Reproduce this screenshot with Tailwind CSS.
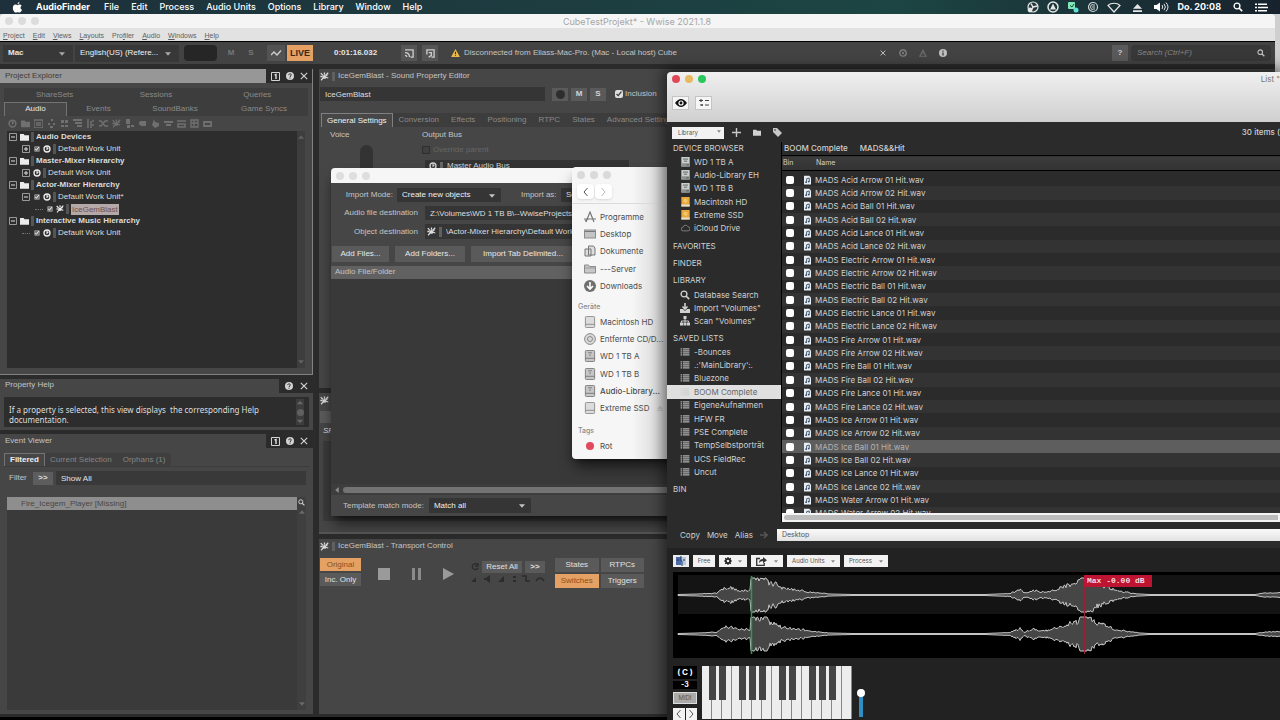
<!DOCTYPE html>
<html lang="de">
    <head>
        <meta charset="UTF-8">
        <title>CubeTestProjekt - Wwise</title>
        <script src="https://cdn.jsdelivr.net/npm/@tailwindcss/browser@4"></script>
    </head>
    <body class="relative flex flex-col h-screen overflow-hidden bg-[#1c1c1c] font-['Liberation_Sans',Arial,sans-serif] text-[8px] leading-3 text-[#c4c4c4]">
      <!-- icon set -->
      <svg class="hidden">
        <symbol id="sfx" viewBox="0 0 12 12"><g stroke="currentColor" stroke-width="1.700" fill="none"><path d="M1 1.500l3 3M6 .5v3M11 1L7.500 4.500M.5 6h3M1.500 11l3-3.500M8 7l3 1"/></g><circle cx="6" cy="6.500" r="2.600" fill="currentColor"/><circle cx="9" cy="4" r="1.200" fill="currentColor"/></symbol>
        <symbol id="dir" viewBox="0 0 12 10"><path d="M0 1h5l1 1.500h6V10H0z" fill="currentColor"/></symbol>
        <symbol id="unit" viewBox="0 0 12 12"><circle cx="6" cy="6" r="4.500" fill="none" stroke="currentColor" stroke-width="2"/><path d="M6 2v4.500l2-2" fill="none" stroke="currentColor" stroke-width="1.600"/></symbol>
        <symbol id="help" viewBox="0 0 12 12"><circle cx="6" cy="6" r="6" fill="#d4d4d4"/><path d="M4 4.700c0-2.600 4-2.500 4-.3C8 6 6 5.800 6 7.500M6 8.500v1.500" fill="none" stroke="#2b2b2b" stroke-width="1.500"/></symbol>
        <symbol id="close" viewBox="0 0 10 10"><path d="M1 1l8 8M9 1L1 9" stroke="#d4d4d4" stroke-width="1.400"/></symbol>
        <symbol id="one" viewBox="0 0 9 9"><path d="M.5.5h8v8h-8z" fill="none" stroke="#d4d4d4"/><path d="M3.500 3L5 2.500V7" fill="none" stroke="#f0f0f0" stroke-width="1.300"/></symbol>
        <symbol id="down" viewBox="0 0 10 6"><path d="M0 0h10L5 6z" fill="currentColor"/></symbol>
        <symbol id="lens" viewBox="0 0 12 12"><circle cx="4.800" cy="4.800" r="3.500" fill="none" stroke="currentColor" stroke-width="1.600"/><path d="M7.500 7.500L11 11" stroke="currentColor" stroke-width="2"/></symbol>
        <symbol id="hdd" viewBox="0 0 10 12"><path d="M0 0h10v11.500H0z" fill="#c9cdcc"/><path d="M0 7.500h10v4H0z" fill="#8d9291"/><path d="M2 2.500h6M3 5h4M6 9.500h3" stroke="#4c5654"/></symbol>
        <symbol id="ssd" viewBox="0 0 10 12"><path d="M0 0h10v11.500H0z" fill="#eaa93c"/><path d="M0 9h10v2.500H0z" fill="#e4dfd4"/><circle cx="5" cy="4.500" r="2.500" fill="#f4c66b"/></symbol>
        <symbol id="disk" viewBox="0 0 12 13"><rect x="1" y=".5" width="10" height="12" rx="1" fill="#dcdcdc" stroke="#8b8b8b"/><path d="M1 9h10" stroke="#8b8b8b"/></symbol>
        <symbol id="disk2" viewBox="0 0 12 13"><rect x="1" y=".5" width="10" height="12" rx="1" fill="#c6c6c6" stroke="#7b7b7b"/><path d="M1 9h10M4 3h4M5 5.500h2" stroke="#777"/></symbol>
        <symbol id="rows" viewBox="0 0 11 10"><path d="M0 1.200h2m1 0h8M0 3.700h2m1 0h8M0 6.200h2m1 0h8M0 8.700h2m1 0h8" stroke="currentColor" stroke-width="1.600"/></symbol>
        <symbol id="wav" viewBox="0 0 8 10"><path d="M0 0h6l2 2v8H0z" fill="#e9edf1"/><path d="M3 7.500V3.500l3-.8v4" fill="none" stroke="#33506c"/><circle cx="2.400" cy="7.500" r="1" fill="#33506c"/><circle cx="5.400" cy="6.800" r="1" fill="#33506c"/></symbol>
      </svg>

      <!-- macOS menu bar -->
      <header class="flex items-center h-[14px] shrink-0 px-3 bg-linear-to-r from-[#1d303b] via-[#1c4543] via-70% to-[#17222d] font-['Inter',sans-serif] text-[9px] font-medium text-white">
        <svg class="w-[11px] h-[11px] mr-[13px]" viewBox="0 0 12 13"><path d="M8.300 0c0 1.500-1 2.700-2.300 2.700C6 1.300 7 .2 8.300 0zM6 3.700c.8 0 1.300-.6 2.500-.6 1 0 1.900.5 2.400 1.300-2 1.200-1.700 4 .4 4.900-.5 1.500-1.600 3.200-2.800 3.200-.9 0-1.200-.5-2.300-.5s-1.500.5-2.300.5C2.300 12.500.5 9.600.5 7.100.5 4.500 2 3.100 3.700 3.100c1 0 1.700.6 2.300.6z" fill="#fff"/></svg>
        <nav class="flex gap-3">
          <a href="#" class="pr-[2px] font-bold">AudioFinder</a>
          <a href="#">File</a>
          <a href="#">Edit</a>
          <a href="#">Process</a>
          <a href="#">Audio Units</a>
          <a href="#">Options</a>
          <a href="#">Library</a>
          <a href="#">Window</a>
          <a href="#">Help</a>
        </nav>
        <div class="flex items-center gap-2 ml-auto">
          <svg class="size-3" viewBox="0 0 12 12"><circle cx="6" cy="6" r="5" fill="#26383f" stroke="#e6e6e6" stroke-width="1.200"/><path d="M6 6L4 2.500M6 6l4.500-1M6 6l-2 4" stroke="#e6e6e6" stroke-width="1.500"/><circle cx="3" cy="9" r="2.400" fill="#e6e6e6"/></svg>
          <svg class="size-3" viewBox="0 0 12 12"><circle cx="6" cy="6" r="5" fill="none" stroke="#e6e6e6" stroke-width="1.500"/><path d="M6 2.500L9 8.500H3z" fill="#e6e6e6"/></svg>
          <svg class="size-3" viewBox="0 0 12 12"><rect x="1" y="1" width="7" height="7" rx="1" fill="#7fe8b6"/><path d="M3 4.500l2 1.500 2-3" stroke="#1b4b3d" fill="none"/><circle cx="9" cy="9" r="2.500" fill="#5ee0d4"/></svg>
          <svg class="size-3" viewBox="0 0 12 12"><circle cx="6" cy="6" r="4.500" fill="none" stroke="#d0d6d8" stroke-width="1.200"/><path d="M6 3.500a2.500 2.500 0 000 5M6 4h2M5 6h3M6 8h2" fill="none" stroke="#d0d6d8"/></svg>
          <svg class="w-[14px] h-3" viewBox="0 0 14 12"><path d="M1 4.500C4 1.500 10 1.500 13 4.500L7 11z" fill="none" stroke="#e6e6e6" stroke-width="1.200"/></svg>
          <svg class="mx-1 size-[9px]" viewBox="0 0 10 10"><path d="M5 1l5 5.500H0zM0 8h10v2H0z" fill="#e6e6e6"/></svg>
          <svg class="w-[15px] h-3" viewBox="0 0 15 12"><path d="M0 4h2.500L6 1.500v9L2.500 8H0z" fill="#fff"/><path d="M8 4q1.500 2 0 4M10 2.800q2.800 3.200 0 6.400M12 1.500q4 4.500 0 9" fill="none" stroke="#e6e6e6"/></svg>
          <span class="font-bold">Do. 20:08</span>
          <svg class="ml-1 size-[10px]"><use href="#lens"/></svg>
          <svg class="w-[13px] h-[9px] ml-1" viewBox="0 0 13 9"><path d="M0 1.200h2m1 0h9M0 4.500h2m1 0h10M0 7.800h2m1 0h9" stroke="#fff" stroke-width="1.500"/></svg>
        </div>
      </header>

      <!-- Wwise -->
      <div class="flex flex-col flex-1 min-h-0 pr-[5px] border-b-3 border-black bg-[#cfcfcf]">
        <div class="flex items-center h-[14px] shrink-0 px-[5px] gap-[5px] bg-[#f5f5f5] rounded-t">
          <span class="size-2 rounded-full bg-[#dcdcdc]"></span>
          <span class="size-2 rounded-full bg-[#dcdcdc]"></span>
          <span class="size-2 rounded-full bg-[#dcdcdc]"></span>
          <h1 class="flex-1 pr-10 pt-[2px] text-center font-['Inter',sans-serif] text-[9px] text-[#a6a6a6]">CubeTestProjekt* - Wwise 2021.1.8</h1>
        </div>
        <nav class="flex items-center h-[14px] shrink-0 pt-[2px] px-[3px] gap-2 border-b border-black bg-[#e2e2e2] text-[7px] text-[#5e5e5e]">
          <a href="#"><u>P</u>roject</a>
          <a href="#"><u>E</u>dit</a>
          <a href="#"><u>V</u>iews</a>
          <a href="#"><u>L</u>ayouts</a>
          <a href="#">Pro<u>f</u>iler</a>
          <a href="#"><u>A</u>udio</a>
          <a href="#"><u>W</u>indows</a>
          <a href="#"><u>H</u>elp</a>
        </nav>

        <div class="flex items-center h-6 shrink-0 pr-1 bg-[#434343] border-b-2 border-[#2b2b2b]">
          <label class="relative ml-[3px]">
            <select aria-label="Platform" class="w-[70px] h-[17px] px-[5px] appearance-none bg-[#383838] text-[#e6e6e6] font-bold"><option>Mac</option></select>
            <svg class="absolute right-2 top-[7px] w-[6px] h-1 text-[#a8a8a8]"><use href="#down"/></svg>
          </label>
          <label class="relative ml-[2px]">
            <select aria-label="Language" class="w-[104px] h-[17px] px-[5px] appearance-none bg-[#383838] text-[#f0f0f0]"><option>English(US) (Refere...</option></select>
            <svg class="absolute right-2 top-[7px] w-[6px] h-1 text-[#a8a8a8]"><use href="#down"/></svg>
          </label>
          <span class="w-[33px] h-4 ml-[5px] rounded-sm bg-[#262626]"></span>
          <button class="w-5 h-4 ml-1 font-bold text-[#777]">M</button>
          <button class="w-5 h-4 font-bold text-[#777]">S</button>
          <button class="grid w-[18px] h-4 ml-[6px] place-items-center bg-[#535353]"><svg class="w-[11px] h-[6px]" viewBox="0 0 11 6"><path d="M0 5l3-3 3 3 4-4.500" fill="none" stroke="#d0d0d0" stroke-width="1.300"/></svg></button>
          <button class="w-[26px] h-4 ml-[2px] bg-[#e5a063] font-bold text-[9px] text-[#3a2a1a]">LIVE</button>
          <span class="ml-[21px] w-[67px] font-bold text-[#e6e6e6]">0:01:16.032</span>
          <button class="grid w-4 h-4 mr-[5px] place-items-center bg-[#555]"><svg class="size-[9px]" viewBox="0 0 10 10"><path d="M0 1h9v8H6M0 4q5 0 5 5M0 7q2 0 2 2" fill="none" stroke="#ccc" stroke-width="1.500"/></svg></button>
          <button class="grid w-4 h-4 place-items-center bg-[#555]"><svg class="size-[9px]" viewBox="0 0 10 10"><path d="M1 6V1h8v8H6M3 4h3v3L3 9" fill="none" stroke="#ccc" stroke-width="1.500"/></svg></button>
          <svg class="w-[9px] h-2 ml-[13px] mr-1" viewBox="0 0 10 9"><path d="M5 0l5 9H0z" fill="#e9b949"/><path d="M5 3v3M5 7v1" stroke="#3a2d10" stroke-width="1.200"/></svg>
          <p class="w-[415px]">Disconnected from Eliass-Mac-Pro. (Mac - Local host) Cube</p>
          <div class="flex items-center gap-3">
            <svg class="size-[6px] mx-px"><use href="#close"/></svg>
            <svg class="size-2" viewBox="0 0 10 10"><circle cx="5" cy="5" r="4" fill="none" stroke="#858585" stroke-width="1.600"/><path d="M3.500 3.500l3 3m0-3l-3 3" stroke="#858585"/></svg>
            <svg class="size-2" viewBox="0 0 10 9"><path d="M5 1l4 7.500H1zM5 4v2" fill="none" stroke="#6c6c6c" stroke-width="1.400"/></svg>
            <svg class="size-2" viewBox="0 0 10 10"><circle cx="5" cy="5" r="5" fill="#c0c0c0"/><path d="M5 2v1.500M5 4.500V8" stroke="#444" stroke-width="1.700"/></svg>
          </div>
          <button class="w-4 h-4 ml-auto bg-[#5a5a5a] font-bold text-[#d0d0d0]">?</button>
          <label class="flex items-center w-[140px] h-4 ml-[3px] px-[6px] rounded-sm bg-[#383838]">
            <input aria-label="Search" placeholder="Search (Ctrl+F)" class="flex-1 min-w-0 italic placeholder:text-[#858585]">
            <svg class="size-2 text-[#c0c0c0]"><use href="#lens"/></svg>
          </label>
        </div>

        <div class="flex flex-1 min-h-0 gap-[6px] pt-[3px] bg-[#2b2b2b]">
          <!-- left column -->
          <div class="flex flex-col w-[313px] shrink-0 gap-1 pb-[3px]">
            <section class="flex flex-col h-[306px] border-r border-b border-[#828282] bg-[#464646]">
              <header class="flex h-[14px] shrink-0 bg-[#2b2b2b]">
                <h2 class="flex-1 px-[5px] pt-px bg-[#979797] text-[#3c3c3c]">Project Explorer</h2>
                <div class="flex items-center gap-[6px] pl-[5px] pr-1">
                  <svg class="size-[9px]"><use href="#one"/></svg>
                  <svg class="size-2"><use href="#help"/></svg>
                  <svg class="size-2"><use href="#close"/></svg>
                </div>
              </header>
              <div class="grid grid-cols-3 mx-1 mt-[5px] h-[14px] shrink-0 text-center leading-[14px] text-[#8a8a8a] bg-[#3d3d3d]">
                <a href="#">ShareSets</a>
                <a href="#">Sessions</a>
                <a href="#">Queries</a>
              </div>
              <div class="grid grid-cols-[63px_63px_90px_1fr] mx-1 h-[14px] shrink-0 text-center leading-[14px] text-[#8a8a8a] bg-[#3d3d3d]">
                <a href="#" class="border-t border-x border-[#737373] bg-[#474747] text-[#e8e8e8] leading-3">Audio</a>
                <a href="#">Events</a>
                <a href="#">SoundBanks</a>
                <a href="#">Game Syncs</a>
              </div>
              <div class="flex items-center h-[15px] shrink-0 px-2 gap-[4px] text-[#707070]">
                <svg class="size-[9px]"><use href="#unit"/></svg>
                <svg class="size-[9px]"><use href="#dir"/></svg>
                <svg class="size-[9px]" viewBox="0 0 9 9"><path d="M0 1h9v8H0zM2 4h5M2 6h5" fill="none" stroke="currentColor" stroke-width="1.400"/></svg>
                <svg class="size-[9px]" viewBox="0 0 9 9"><path d="M4 0h2v2H4zM1 4h2v2H1zM6 4h2v2H6zM3 7h3v2H3z" fill="currentColor"/></svg>
                <svg class="size-[9px]" viewBox="0 0 9 9"><path d="M1 1h3v3H1zM5 1h3v3H5zM1 6h3v2H1zM5 6h3v2H5z" fill="currentColor"/></svg>
                <svg class="size-[9px]" viewBox="0 0 9 9"><path d="M0 1h9M2 4h7M4 7h5" stroke="currentColor" stroke-width="1.800"/></svg>
                <svg class="size-[9px]" viewBox="0 0 9 9"><path d="M2 0v9M5 2v7M7 1v2M7 5v2" stroke="currentColor" stroke-width="1.500"/></svg>
                <svg class="size-[9px]" viewBox="0 0 9 9"><path d="M0 2h2l4 5h3M0 7h2l4-5h3" fill="none" stroke="currentColor" stroke-width="1.300"/></svg>
                <svg class="size-[9px]"><use href="#sfx"/></svg>
                <svg class="size-[9px]" viewBox="0 0 9 9"><path d="M1 0h4v5H1zM2 6h3v3H2zM6 6h3v2H6z" fill="currentColor"/></svg>
                <svg class="size-[9px]" viewBox="0 0 9 9"><path d="M1 3l2-1h5v5H3L1 5z" fill="currentColor"/></svg>
                <svg class="size-[9px]" viewBox="0 0 9 9"><path d="M3 0l1 3 4 1v3L4 9 1 6z" fill="currentColor"/></svg>
                <svg class="size-[9px]" viewBox="0 0 9 9"><path d="M0 3h9M2 6h5" stroke="currentColor" stroke-width="1.800"/></svg>
                <svg class="size-[9px]" viewBox="0 0 9 9"><path d="M0 2h9M1 5h7v3H1z" fill="none" stroke="currentColor" stroke-width="1.500"/></svg>
                <svg class="size-[9px]" viewBox="0 0 9 9"><path d="M1 1h7v7H1zM1 4h7M4 1v7" fill="none" stroke="currentColor" stroke-width="1.300"/></svg>
                <svg class="size-[9px]" viewBox="0 0 9 9"><path d="M1 3h7v4H1z" fill="none" stroke="currentColor" stroke-width="1.800"/></svg>
              </div>
              <div class="flex flex-1 min-h-0 mx-[7px] mb-[6px] bg-[#2d2d2d]">
                <ul id="tree" class="flex-1"></ul>
                <div class="flex flex-col items-center justify-between w-2 py-1 bg-[#3d3d3d] text-[#606060]">
                  <svg class="w-[6px] h-1 rotate-180"><use href="#down"/></svg>
                  <svg class="w-[6px] h-1"><use href="#down"/></svg>
                </div>
              </div>
            </section>

            <section class="h-[51px] shrink-0 bg-[#464646]">
              <header class="flex h-[14px]">
                <h2 class="flex-1 px-[5px]">Property Help</h2>
                <div class="flex items-center gap-[7px] pl-[6px] pr-[5px] bg-[#2b2b2b]">
                  <svg class="size-2"><use href="#help"/></svg>
                  <svg class="size-2"><use href="#close"/></svg>
                </div>
              </header>
              <div class="flex mx-1 mt-1 h-[30px] bg-[#2d2d2d]">
                <p class="flex-1 pl-[5px] pt-2 font-['Noto_Sans',sans-serif] leading-[10px] text-[#dedede]">If a property is selected, this view displays &nbsp;the corresponding Help documentation.</p>
                <div class="flex flex-col items-center justify-between w-2 mr-[5px] my-[2px] py-px bg-[#3d3d3d] text-[#686868]">
                  <svg class="w-[6px] h-[5px] rotate-180"><use href="#down"/></svg>
                  <span class="size-[7px] rounded-full bg-[#606060]"></span>
                  <svg class="w-[6px] h-[5px]"><use href="#down"/></svg>
                </div>
              </div>
            </section>

            <section class="flex flex-col flex-1 min-h-0 bg-[#464646]">
              <header class="flex h-[14px] shrink-0">
                <h2 class="flex-1 px-[5px] pt-px">Event Viewer</h2>
                <div class="flex items-center gap-[6px] px-[5px] bg-[#2b2b2b]">
                  <svg class="size-[9px]"><use href="#one"/></svg>
                  <svg class="size-2"><use href="#help"/></svg>
                  <svg class="size-2"><use href="#close"/></svg>
                </div>
              </header>
              <div class="flex mx-1 mt-[5px] h-[14px] shrink-0 border-b border-[#3c3c3c] leading-[14px] text-[#858585]">
                <a href="#" class="px-[5px] border-t border-x border-[#737373] font-bold text-[#f0f0f0] leading-3">Filtered</a>
                <a href="#" class="px-[5px] bg-[#3f3f3f]">Current Selection</a>
                <a href="#" class="px-[6px] bg-[#3f3f3f]">Orphans (1)</a>
              </div>
              <div class="flex items-center mt-1 mx-[7px] h-[14px] shrink-0">
                <label for="filter" class="w-[26px] pl-[2px]">Filter</label>
                <button class="w-5 h-[13px] bg-[#5d5d5d] font-bold text-[#dcdcdc]">&gt;&gt;</button>
                <input id="filter" value="Show All" class="flex-1 min-w-0 h-[14px] ml-[3px] px-[5px] bg-[#393939] text-[#e4e4e4]">
              </div>
              <div class="flex flex-1 min-h-0 mx-[7px] mt-3 mb-1">
                <ul class="flex-1 bg-[#3a3a3a]">
                  <li class="h-[13px] pl-[14px] leading-[13px] bg-[#8e8e8e] text-[#484848]">Fire_Icegem_Player [Missing]</li>
                </ul>
                <div class="flex flex-col items-center justify-between w-[9px] pt-[2px] pb-1 bg-[#3f3f3f] text-[#6a6a6a]">
                  <div class="flex flex-col items-center gap-1">
                    <svg class="size-[7px] text-[#d8d8d8]"><use href="#lens"/></svg>
                    <svg class="w-[6px] h-1 rotate-180"><use href="#down"/></svg>
                  </div>
                  <svg class="w-[6px] h-1"><use href="#down"/></svg>
                </div>
              </div>
            </section>
          </div>

          <!-- right column -->
          <div class="flex flex-col flex-1 min-w-0 gap-[5px] pb-[3px]">
            <section class="h-[319px] shrink-0 bg-[#464646]">
              <header class="flex items-center h-[14px] px-px">
                <svg class="size-[9px] text-[#d8d8d8]"><use href="#sfx"/></svg>
                <span class="w-[3px] h-[9px] mx-[3px] bg-[#606060]"></span>
                <h2>IceGemBlast - Sound Property Editor</h2>
              </header>
              <div class="flex items-center mt-1 px-px h-[14px]">
                <input aria-label="Name" value="IceGemBlast" class="w-[225px] h-[14px] px-[5px] bg-[#353535] text-[#dedede]">
                <button aria-label="Color" class="grid w-4 h-[13px] ml-[7px] place-items-center bg-[#5a5a5a]"><span class="size-[9px] rounded-full bg-[#2e2e2e]"></span></button>
                <button class="w-4 h-[13px] ml-[3px] bg-[#5a5a5a] font-bold text-[#d4d4d4]">M</button>
                <button class="w-4 h-[13px] ml-[3px] bg-[#5a5a5a] font-bold text-[#d4d4d4]">S</button>
                <label class="flex items-center gap-[2px] ml-[9px]"><input type="checkbox" checked class="size-2 accent-[#ddd]">Inclusion</label>
              </div>
              <div class="flex mt-3 ml-[2px] h-[14px] leading-[14px] bg-[#3d3d3d] text-[#8a8a8a]">
                <a href="#" class="px-[5px] border-t border-x border-[#808080] bg-[#474747] text-[#f0f0f0]">General Settings</a>
                <a href="#" class="px-[6px]">Conversion</a>
                <a href="#" class="px-[6px]">Effects</a>
                <a href="#" class="px-[6px]">Positioning</a>
                <a href="#" class="px-[6px]">RTPC</a>
                <a href="#" class="px-[6px]">States</a>
                <a href="#" class="px-[6px]">Advanced Settings</a>
              </div>
              <div class="flex">
                <div class="w-[103px] pl-[11px] pt-[2px]">
                  <h3>Voice</h3>
                  <div class="w-[13px] h-10 mt-1 ml-[30px] rounded-full bg-[#333]"></div>
                </div>
                <div class="pt-[2px]">
                  <h3>Output Bus</h3>
                  <label class="flex items-center gap-[3px] h-[17px] text-[#666]"><input type="checkbox" class="appearance-none size-2 border border-[#2e2e2e] bg-[#404040]">Override parent</label>
                  <div class="flex items-center w-[204px] h-3 ml-[3px] pl-1 mt-[2px] bg-[#333] text-[#d0d0d0]">
                    <svg class="size-2"><use href="#unit"/></svg>
                    <span class="w-[3px] h-2 ml-[3px] mr-1 bg-[#666]"></span>Master Audio Bus
                  </div>
                </div>
              </div>
            </section>

            <section class="h-[141px] shrink-0 border-b-2 border-[#555] bg-[#464646]">
              <div class="h-[14px] pl-px pt-[3px]"><svg class="size-[9px] text-[#d8d8d8]"><use href="#sfx"/></svg></div>
              <div class="w-10 h-3 mt-1 ml-px bg-[#5a5a5a]"></div>
              <p class="pl-1 mt-[2px] italic text-[#dedede]">SFX</p>
              <div class="h-20 mt-1 ml-1 bg-[#3b3b3b]"></div>
            </section>

            <section class="flex-1 min-h-0 bg-[#464646]">
              <header class="flex items-center h-[14px] px-px">
                <svg class="size-[9px] text-[#d8d8d8]"><use href="#sfx"/></svg>
                <span class="w-[3px] h-[9px] mx-[3px] bg-[#606060]"></span>
                <h2>IceGemBlast - Transport Control</h2>
              </header>
              <div class="flex mt-[5px] pl-px">
                <div class="grid w-[41px] gap-[2px] h-7">
                  <button class="bg-[#e5a063] text-[#8a5220]">Original</button>
                  <button class="bg-[#5a5a5a] text-[#e0e0e0]">Inc. Only</button>
                </div>
                <div class="flex items-center gap-[22px] h-7 w-[110px] pl-[17px]">
                  <button aria-label="Stop" class="size-3 mt-1 bg-[#9a9a9a]"></button>
                  <button aria-label="Pause" class="w-[9px] h-3 mt-1 border-x-3 border-[#8a8a8a]"></button>
                  <button aria-label="Play" class="mt-1"><svg class="w-[11px] h-3" viewBox="0 0 11 12"><path d="M0 0l11 6-11 6z" fill="#9a9a9a"/></svg></button>
                </div>
                <div class="w-[76px] pt-[3px]">
                  <div class="flex items-center gap-[3px] h-3">
                    <svg class="size-2" viewBox="0 0 8 8"><path d="M6.500 1.500A3 3 0 107 5M7 0v3H4" fill="none" stroke="#2c2c2c" stroke-width="1.300"/></svg>
                    <button class="w-10 h-3 bg-[#5a5a5a] text-[#e0e0e0]">Reset All</button>
                    <button class="w-5 h-3 bg-[#5a5a5a] font-bold text-[#e0e0e0]">&gt;&gt;</button>
                  </div>
                  <svg class="w-[76px] h-2 mt-[2px]" viewBox="0 0 76 8"><path d="M0 7l5-5v5zM13 3h2l4-3v8l-4-3h-2zM27 7l6-6v6zM42 1h3v2h-3zM42 5h3v2h-3z" fill="#2c2c2c"/><path d="M51 1h4v5h4M65 6q4-6 8 0" fill="none" stroke="#2c2c2c" stroke-width="1.600"/></svg>
                </div>
                <div class="grid grid-cols-2 w-[89px] h-[30px] ml-2 gap-[2px]">
                  <button class="bg-[#5a5a5a] text-[#e0e0e0]">States</button>
                  <button class="bg-[#5a5a5a] text-[#e0e0e0]">RTPCs</button>
                  <button class="bg-[#e5a063] text-[#8a5220]">Switches</button>
                  <button class="bg-[#5a5a5a] text-[#e0e0e0]">Triggers</button>
                </div>
              </div>
            </section>
          </div>
        </div>
      </div>

      <!-- import dialog -->
      <section class="absolute left-[331px] top-[168px] flex flex-col w-[400px] h-[348px] rounded-t bg-[#464646] shadow-lg shadow-black/60 overflow-hidden">
        <header class="flex items-center h-[15px] shrink-0 px-[5px] gap-[5px] bg-[#f6f6f6]">
          <span class="size-2 rounded-full bg-[#dedede]"></span>
          <span class="size-2 rounded-full bg-[#dedede]"></span>
          <span class="size-2 rounded-full bg-[#dedede]"></span>
        </header>
        <div class="flex flex-col gap-1 pt-[5px]">
          <div class="flex items-center">
            <label for="mode" class="w-[66px] pr-1 text-right">Import Mode:</label>
            <div class="relative">
              <select id="mode" class="w-[104px] h-[14px] px-[5px] appearance-none bg-[#353535] text-[#f0f0f0]"><option>Create new objects</option></select>
              <svg class="absolute right-[6px] top-[6px] w-[6px] h-1"><use href="#down"/></svg>
            </div>
            <label for="kind" class="ml-5 w-[40px]">Import as:</label>
            <select id="kind" class="w-[104px] h-[14px] px-[5px] appearance-none bg-[#353535] text-[#f0f0f0]"><option>Sound SFX</option></select>
          </div>
          <div class="flex items-center">
            <label for="filedest" class="w-[94px] pr-[7px] text-right">Audio file destination</label>
            <input id="filedest" value="Z:\Volumes\WD 1 TB B\--WwiseProjects" class="w-[240px] h-[14px] px-[5px] bg-[#353535] text-[#dedede]">
          </div>
          <div class="flex items-center">
            <label for="objdest" class="w-[94px] pr-[7px] text-right">Object destination</label>
            <div class="flex items-center w-[240px] h-[15px] px-[2px] bg-[#353535] text-[#dedede]">
              <svg class="size-[9px]"><use href="#sfx"/></svg>
              <span class="w-[3px] h-[10px] ml-[3px] mr-1 bg-[#606060]"></span>
              <input id="objdest" value="\Actor-Mixer Hierarchy\Default Work Unit" class="flex-1">
            </div>
          </div>
        </div>
        <div class="flex gap-[6px] h-4 mt-[7px] pl-px shrink-0 text-[#e8e8e8]">
          <button class="w-[57px] bg-[#5a5a5a]">Add Files...</button>
          <button class="w-[70px] bg-[#5a5a5a]">Add Folders...</button>
          <button class="w-[104px] bg-[#5a5a5a]">Import Tab Delimited...</button>
        </div>
        <div class="h-[13px] mt-1 pl-1 shrink-0 bg-[#616161]">Audio File/Folder</div>
        <div class="flex-1 bg-[#393939]"></div>
        <div class="flex items-center gap-[3px] h-[11px] pl-[3px] shrink-0 bg-[#3d3d3d] text-[#8a8a8a]">
          <svg class="w-[6px] h-1 rotate-90"><use href="#down"/></svg>
          <span class="flex-1 h-[6px] bg-[#737373] rounded-sm"></span>
        </div>
        <div class="flex items-center h-[21px] pl-3 gap-[5px] shrink-0">
          <label for="match">Template match mode:</label>
          <div class="relative">
            <select id="match" class="w-[102px] h-[15px] px-[5px] appearance-none bg-[#353535] text-[#f0f0f0]"><option>Match all</option></select>
            <svg class="absolute right-[6px] top-[6px] w-[6px] h-1"><use href="#down"/></svg>
          </div>
        </div>
      </section>

      <!-- Finder -->
      <section class="absolute left-[572px] top-[167px] w-[120px] h-[292px] rounded bg-linear-to-r from-[#f6f6f6] from-50% to-[#bbb] shadow-lg shadow-black/60 overflow-hidden font-['Inter',sans-serif] text-[#4c4c4c]">
        <header class="h-[37px] px-[5px] pt-1 border-b border-[#dadada]">
          <div class="flex gap-[5px]">
            <span class="size-2 rounded-full bg-[#dadada]"></span>
            <span class="size-2 rounded-full bg-[#dadada]"></span>
            <span class="size-2 rounded-full bg-[#dadada]"></span>
          </div>
          <div class="flex gap-px mt-[5px]">
            <button aria-label="Back" class="grid w-[17px] h-[15px] place-items-center rounded-sm bg-white shadow-sm"><svg class="w-[5px] h-2" viewBox="0 0 5 8"><path d="M4.500 0L1 4l3.500 4" fill="none" stroke="#555"/></svg></button>
            <button aria-label="Forward" class="grid w-[17px] h-[15px] place-items-center rounded-sm bg-white shadow-sm"><svg class="w-[5px] h-2" viewBox="0 0 5 8"><path d="M.5 0L4 4 .5 8" fill="none" stroke="#bbb"/></svg></button>
          </div>
        </header>
        <ul class="grid h-[87px] mt-1 pl-3">
          <li class="flex items-center gap-1"><svg class="size-3" viewBox="0 0 12 12"><path d="M2 11L6 1l4 10M0 8h12M1 10l3-2" fill="none" stroke="#777" stroke-width="1.200"/></svg>Programme</li>
          <li class="flex items-center gap-1"><svg class="size-3" viewBox="0 0 12 12"><rect x=".5" y="2" width="11" height="8" fill="#c4c4c4" stroke="#8b8b8b"/><path d="M1 3.500h10" stroke="#777"/></svg>Desktop</li>
          <li class="flex items-center gap-1"><svg class="size-3" viewBox="0 0 12 12"><path d="M1 4h6v7H1zM4.500 1h5L11 3v7H4.500z" fill="#ddd" stroke="#777"/></svg>Dokumente</li>
          <li class="flex items-center gap-1"><svg class="size-3" viewBox="0 0 12 12"><path d="M.5 2h4l1 1.500h6V10H.5z" fill="#c8c8c8" stroke="#8b8b8b"/><path d="M1 5h10" stroke="#999"/></svg>---Server</li>
          <li class="flex items-center gap-1"><svg class="size-3" viewBox="0 0 12 12"><circle cx="6" cy="6" r="6" fill="#6f6f6f"/><path d="M6 2v6M3 6l3 3 3-3" fill="none" stroke="#fff" stroke-width="1.600"/></svg>Downloads</li>
        </ul>
        <h3 class="mt-[6px] pl-[6px] text-[7px] font-medium text-[#8a8a8a]">Geräte</h3>
        <ul class="grid h-[104px] pl-3 whitespace-nowrap">
          <li class="flex items-center gap-1"><svg class="size-3"><use href="#disk"/></svg>Macintosh HD</li>
          <li class="flex items-center gap-1"><svg class="size-3" viewBox="0 0 12 12"><circle cx="6" cy="6" r="5.400" fill="#d8d8d8" stroke="#8b8b8b"/><circle cx="6" cy="6" r="2.500" fill="none" stroke="#8b8b8b"/></svg>Entfernte CD/D...</li>
          <li class="flex items-center gap-1"><svg class="size-3"><use href="#disk2"/></svg>WD 1 TB A</li>
          <li class="flex items-center gap-1"><svg class="size-3"><use href="#disk2"/></svg>WD 1 TB B</li>
          <li class="flex items-center gap-1 font-medium"><svg class="size-3"><use href="#disk2"/></svg>Audio-Library...</li>
          <li class="flex items-center gap-1"><svg class="size-3"><use href="#disk"/></svg>Extreme SSD<svg class="size-[6px] ml-1" viewBox="0 0 10 10"><path d="M5 1l5 5.500H0zM0 8h10v2H0z" fill="#c0c0c0"/></svg></li>
        </ul>
        <h3 class="mt-2 pl-[6px] text-[7px] font-medium text-[#8a8a8a]">Tags</h3>
        <p class="flex items-center gap-[6px] mt-[3px] pl-[14px]"><span class="size-2 rounded-full bg-[#e2495c]"></span>Rot</p>
      </section>

      <!-- AudioFinder -->
      <main class="absolute left-[667px] right-0 top-[72px] bottom-0 flex flex-col overflow-hidden rounded-tl bg-[#2b2b2b] shadow-[0_0_14px_4px_rgba(0,0,0,0.5)] font-['Inter',sans-serif] text-[#d0d0d0]">
        <header class="h-[50px] shrink-0 pl-[5px] pt-[3px] bg-linear-to-b from-[#f0f0f0] to-[#cfcfcf]">
          <div class="flex items-center gap-[5px] h-2">
            <span class="size-2 rounded-full bg-[#e0485a]"></span>
            <span class="size-2 rounded-full bg-[#e8b863]"></span>
            <span class="size-2 rounded-full bg-[#28c85c]"></span>
            <h1 class="ml-auto text-[8px] text-[#777]">List "</h1>
          </div>
          <div class="flex gap-[6px] mt-[13px]">
            <button aria-label="Preview" class="grid w-[17px] h-[14px] place-items-center border border-[#c4c4c4] bg-[#f6f6f6]"><svg class="w-3 h-2" viewBox="0 0 12 8"><path d="M0 4Q6-4 12 4 6 12 0 4z" fill="#111"/><circle cx="6" cy="4" r="2.600" fill="#f6f6f6"/><circle cx="6" cy="4" r="1.400" fill="#111"/></svg></button>
            <button aria-label="Options" class="grid w-[17px] h-[14px] place-items-center border border-[#c4c4c4] bg-[#f6f6f6]"><svg class="w-[10px] h-2" viewBox="0 0 10 8"><path d="M0 1.500h4M6 1.500h4M1 6h3M6 6h4M2 0v3M3 5v2" stroke="#444" stroke-width="1.200"/></svg></button>
          </div>
        </header>

        <div class="flex items-center h-5 shrink-0 pl-[5px]">
          <label class="relative">
            <select aria-label="Source" class="w-[52px] h-3 px-[6px] appearance-none bg-[#f2f2f2] text-[6px] leading-3 text-[#555]"><option>Library</option></select>
            <svg class="absolute right-[3px] top-1 w-1 h-[3px] text-[#888]"><use href="#down"/></svg>
          </label>
          <button aria-label="Add" class="ml-2"><svg class="size-[9px]" viewBox="0 0 9 9"><path d="M4.500 0v9M0 4.500h9" stroke="#c8c8c8" stroke-width="1.400"/></svg></button>
          <button aria-label="Folder" class="ml-3"><svg class="w-2 h-[7px]"><use href="#dir"/></svg></button>
          <button aria-label="Tag" class="ml-3"><svg class="size-[9px]" viewBox="0 0 9 9"><path d="M0 0h4l5 5-4 4-5-5z" fill="#c8c8c8"/><circle cx="2" cy="2" r=".8" fill="#2b2b2b"/></svg></button>
          <span class="ml-auto font-medium whitespace-nowrap">30 items (</span>
        </div>

        <div class="flex h-[380px] shrink-0">
          <nav class="w-[114px] shrink-0 whitespace-nowrap">
            <h2 class="pl-[6px] h-[13px]">DEVICE BROWSER</h2>
            <ul class="grid h-20 pl-[14px]">
              <li class="flex items-center gap-1"><svg class="w-[9px] h-[10px]"><use href="#hdd"/></svg>WD 1 TB A</li>
              <li class="flex items-center gap-1"><svg class="w-[9px] h-[10px]"><use href="#hdd"/></svg>Audio-Library EH</li>
              <li class="flex items-center gap-1"><svg class="w-[9px] h-[10px]"><use href="#hdd"/></svg>WD 1 TB B</li>
              <li class="flex items-center gap-1"><svg class="w-[9px] h-[10px]"><use href="#ssd"/></svg>Macintosh HD</li>
              <li class="flex items-center gap-1"><svg class="w-[9px] h-[10px]"><use href="#ssd"/></svg>Extreme SSD</li>
              <li class="flex items-center gap-1"><svg class="w-[9px] h-[10px]" viewBox="0 0 11 10"><path d="M2.500 8.500a2 2 0 010-4.500 3.200 3.200 0 016-.5A2.500 2.500 0 018.500 8.500z" fill="none" stroke="#8d8d8d"/></svg>iCloud Drive</li>
            </ul>
            <h2 class="pl-[6px] mt-[2px] h-[18px] leading-[18px]">FAVORITES</h2>
            <h2 class="pl-[6px] h-[17px] leading-[17px]">FINDER</h2>
            <h2 class="pl-[6px] h-4 leading-4">LIBRARY</h2>
            <ul class="grid h-10 pl-[13px]">
              <li class="flex items-center gap-1"><svg class="size-[10px]"><use href="#lens"/></svg>Database Search</li>
              <li class="flex items-center gap-1"><svg class="size-[10px]" viewBox="0 0 10 10"><path d="M5 0v5M2.500 3.500L5 6l2.500-2.500" fill="none" stroke="currentColor" stroke-width="1.600"/><path d="M0 6h3l2 2 2-2h3v4H0z" fill="currentColor"/></svg>Import "Volumes"</li>
              <li class="flex items-center gap-1"><svg class="size-[10px]" viewBox="0 0 10 10"><path d="M3.500 0h3v3h-3zM0 6.500h3v3H0zM3.500 6.500h3v3h-3zM7 6.500h3v3H7z" fill="currentColor"/><path d="M5 3v3.500M1.500 6.500V5h7v1.500" fill="none" stroke="currentColor"/></svg>Scan "Volumes"</li>
            </ul>
            <h2 class="pl-[6px] mt-[3px] h-[14px] leading-[14px]">SAVED LISTS</h2>
            <ul id="lists" class="grid h-[134px]"></ul>
            <h2 class="pl-[6px] mt-[2px] h-4 leading-4">BIN</h2>
          </nav>

          <div class="flex flex-col flex-1 min-w-0 border-l border-black">
            <div class="flex gap-3 h-[13px] shrink-0 pl-[2px] font-medium">
              <a href="#">BOOM Complete</a>
              <a href="#">MADS&amp;&amp;Hit</a>
            </div>
            <div class="flex-1 min-h-0 overflow-hidden">
              <table class="w-full">
                <thead>
                  <tr class="h-[15px] border-y border-black bg-linear-to-b from-[#3c3c3c] to-[#333] text-[7px]">
                    <th class="w-[22px] pl-px font-normal text-left">Bin</th>
                    <th class="w-[10px]"></th>
                    <th class="pl-[2px] font-normal text-left">Name</th>
                  </tr>
                </thead>
              </table>
              <table class="w-full h-[347px] mt-[2px]">
                <tbody id="files"></tbody>
              </table>
            </div>
            <div class="h-[9px] shrink-0 px-[2px] py-[2px] bg-[#f4f4f4]"><div class="h-full rounded-l-full bg-[#bcbcbc]"></div></div>
          </div>
        </div>

        <div class="flex items-center h-[26px] shrink-0 pl-[13px] gap-[7px] bg-[#2b2b2b]">
          <button>Copy</button>
          <button>Move</button>
          <button>Alias</button>
          <svg class="size-2 mr-[2px]" viewBox="0 0 8 8"><path d="M0 4h7M4 1l3 3-3 3" fill="none" stroke="#555" stroke-width="1.600"/></svg>
          <input aria-label="Target" value="Desktop" class="flex-1 min-w-0 h-3 px-[5px] bg-linear-to-b from-[#fafafa] to-[#e2e2e2] text-[7px] text-[#555]">
        </div>

        <div class="flex-1 min-h-0 pl-[6px] pt-[7px] bg-[#222]">
          <div class="flex gap-1 h-3 text-[6px] text-[#555]">
            <button aria-label="Finder" class="grid w-4 place-items-center bg-[#ececec]"><svg class="size-[10px]" viewBox="0 0 10 10"><path d="M0 1h5v8H0z" fill="#4a6aa8"/><path d="M5 1h5v8H5z" fill="#b9c9e2"/><path d="M5 0v5h1v5M2 3v2M8 3v2" fill="none" stroke="#22345a"/></svg></button>
            <button class="w-[22px] bg-[#f2f2f2]">Free</button>
            <button aria-label="Settings" class="flex items-center justify-between w-7 px-[5px] bg-[#f2f2f2]"><svg class="size-2" viewBox="0 0 10 10"><circle cx="5" cy="5" r="2.700" fill="none" stroke="#222" stroke-width="2.200"/><path d="M5 0v10M0 5h10M1.500 1.500l7 7M8.500 1.500l-7 7" stroke="#222" stroke-width="1.400"/><circle cx="5" cy="5" r="1.600" fill="#f2f2f2"/></svg><svg class="w-1 h-[3px] text-[#888]"><use href="#down"/></svg></button>
            <button aria-label="Share" class="flex items-center justify-between w-8 px-[5px] bg-[#f2f2f2]"><svg class="w-[11px] h-[9px]" viewBox="0 0 11 9"><path d="M4 1.500H.7v7h7.500V6" fill="none" stroke="#333" stroke-width="1.300"/><path d="M3 6q0-4 4-4V0l4 3.200-4 3V4Q4.500 4 3 6z" fill="#333"/></svg><svg class="w-1 h-[3px] text-[#888]"><use href="#down"/></svg></button>
            <button class="flex items-center justify-between w-[53px] px-[5px] bg-[#f2f2f2]">Audio Units<svg class="w-1 h-[3px] text-[#888]"><use href="#down"/></svg></button>
            <button class="flex items-center justify-between w-11 px-[5px] bg-[#f2f2f2]">Process<svg class="w-1 h-[3px] text-[#888]"><use href="#down"/></svg></button>
          </div>
          <div class="relative h-[86px] mt-[5px] overflow-hidden bg-black">
            <svg id="wave" class="w-[620px] h-[86px]" viewBox="0 0 620 86"></svg>
            <span class="absolute left-[411px] top-[3px] w-[68px] h-3 pl-[3px] bg-[#bd1431] font-['Liberation_Mono',monospace] font-bold text-[#f4dfe2]">Max -0.00 dB</span>
          </div>
          <div class="flex mt-2">
            <div class="w-6 text-center">
              <div class="h-[13px] bg-black text-[8px] font-bold text-white">( C )</div>
              <div class="h-2 mt-[2px] bg-black text-[7px] leading-2 font-bold text-white">-3</div>
              <button class="block w-full h-3 mt-[3px] border border-[#ddd] bg-[#aaa] text-[6px] leading-2 text-[#555]">MIDI</button>
              <div class="flex gap-px h-3 mt-1">
                <button aria-label="Lower" class="grid flex-1 place-items-center bg-[#f2f2f2]"><svg class="w-[5px] h-2" viewBox="0 0 5 8"><path d="M4.500 0L1 4l3.500 4" fill="none" stroke="#555"/></svg></button>
                <button aria-label="Higher" class="grid flex-1 place-items-center bg-[#f2f2f2]"><svg class="w-[5px] h-2" viewBox="0 0 5 8"><path d="M.5 0L4 4 .5 8" fill="none" stroke="#555"/></svg></button>
              </div>
            </div>
            <svg id="keys" class="w-[150px] h-[53px] ml-[5px]" viewBox="0 0 150 53"></svg>
            <input type="range" aria-label="Volume" value="100" class="w-2 h-7 mt-[23px] ml-[5px] appearance-none [writing-mode:vertical-lr] [direction:rtl] bg-[linear-gradient(90deg,transparent_30%,#2f8fc4_30%,#2f8fc4_70%,transparent_70%)] [&::-webkit-slider-thumb]:appearance-none [&::-webkit-slider-thumb]:size-2 [&::-webkit-slider-thumb]:rounded-full [&::-webkit-slider-thumb]:bg-white">
          </div>
        </div>
      </main>

    <script>
        // project tree: [indent, expander, checkbox, icon, label]
        const nodes = [
            [2, "-", false, "dir", "Audio Devices"],
            [15, "+", true, "unit", "Default Work Unit"],
            [2, "-", false, "dir", "Master-Mixer Hierarchy"],
            [15, "+", false, "unit", "Default Work Unit"],
            [2, "-", false, "dir", "Actor-Mixer Hierarchy"],
            [15, "-", true, "unit", "Default Work Unit*"],
            [28, "", true, "sfx", "IceGemBlast"],
            [2, "-", false, "dir", "Interactive Music Hierarchy"],
            [15, "", true, "unit", "Default Work Unit"]
        ]
        let html = ""
        for (const [indent, box, check, icon, label] of nodes) {
            const mark = box
                ? `<svg class="size-2 mr-[3px]" viewBox="0 0 8 8"><path d="M.5.5h7v7h-7z" fill="none" stroke="#9a9a9a"/><path d="${box == "+" ? "M2 4h4M4 2v4" : "M2 4h4"}" stroke="#e0e0e0"/></svg>`
                : `<span class="w-2 h-px mr-[3px] border-t border-dotted border-[#777]"></span>`
            html += `
                <li class="flex items-center h-3 text-[#dcdcdc]" style="padding-left:${indent}px">
                    ${mark}
                    ${check ? `<input type="checkbox" checked aria-label="${label}" class="size-[6px] mx-px mr-[3px] accent-[#777]">` : ""}
                    <svg class="${icon == "dir" ? "w-[9px] h-2" : "size-2"} text-[#ececec]"><use href="#${icon}"/></svg>
                    <span class="w-[3px] h-[10px] mx-[2px] bg-[#555]"></span>
                    <span class="${icon == "dir" ? "font-bold" : ""} ${icon == "sfx" ? "px-px leading-[11px] bg-[#b4a8a8] text-[#6e5050]" : ""}">${label}</span>
                </li>
            `
        }
        document.getElementById("tree").innerHTML = html

        // saved lists
        const lists = ["-Bounces", ".:'MainLibrary':.", "Bluezone", "BOOM Complete", "EigeneAufnahmen", "HFW FR", "PSE Complete", "TempSelbstporträt", "UCS FieldRec", "Uncut"]
        document.getElementById("lists").innerHTML = lists.map(name => `
            <li class="flex items-center gap-1 pl-[13px] ${name == "BOOM Complete" ? "bg-[#e0e0e0] text-[#666]" : ""}">
                <svg class="w-[10px] h-2 ${name == "BOOM Complete" ? "text-[#cfcfcf]" : "text-[#b0b0b0]"}"><use href="#rows"/></svg>${name}
            </li>
        `).join("")

        // sound files
        html = ""
        for (const element of ["Acid", "Electric", "Fire", "Ice", "Water"]) {
            for (const shape of ["Arrow", "Ball", "Lance"]) {
                for (const nr of ["01", "02"]) {
                    const name = `MADS ${element} ${shape} ${nr} Hit.wav`
                    if (element == "Water" && shape != "Arrow") continue
                    html += `
                        <tr class="${name.includes("Ice Ball 01") ? "bg-[#5e5e5e] text-[#b4b4b4]" : "even:bg-[#333] odd:bg-[#2b2b2b]"}">
                            <td class="w-[22px] p-0 pl-1"><input type="checkbox" aria-label="${name}" class="block appearance-none size-2 rounded-xs bg-white"></td>
                            <td class="w-[10px] p-0"><svg class="w-[7px] h-[10px]"><use href="#wav"/></svg></td>
                            <td class="p-0 pl-px leading-[10px]">${name}</td>
                        </tr>
                    `
                }
            }
        }
        document.getElementById("files").innerHTML = html

        // waveform: [x, half height]
        const env = [[5, .5], [25, 1], [44, 2], [49, 6], [54, 8], [60, 7], [66, 4], [70, 5], [77, 5], [78, 18], [94, 17], [97, 12], [103, 11], [109, 7], [117, 6], [127, 5], [135, 3], [147, 2], [157, 1], [180, .5],
            [312, .5], [337, 1.5], [347, 6], [351, 2], [361, 5], [367, 3], [377, 4], [387, 7], [397, 11], [406, 13], [408, 20], [417, 20], [423, 12], [431, 9], [442, 5], [452, 3], [467, 1], [477, .5], [582, .5], [592, 2], [620, 3]]
        function height(x, seed) {
            let i = 1
            while (i < env.length - 1 && env[i][0] < x) i++
            const [x0, h0] = env[i - 1], [x1, h1] = env[i]
            const h = h0 + (h1 - h0) * (x - x0) / (x1 - x0)
            const r = Math.sin(x * 12.9898 + seed) * 43758.5453
            return h < 1.2 ? h : Math.min(17, h * (0.7 + 0.5 * (r - Math.floor(r))))
        }
        function channel(cy, seed) {
            let top = "", bottom = ""
            for (let x = 5; x <= 620; x++) {
                const h = height(x, seed)
                top += `${x},${(cy - h).toFixed(1)} `
                bottom = `${x},${(cy + h).toFixed(1)} ` + bottom
            }
            return `<polygon points="${top}${bottom}" fill="#464646" stroke="#c4c4c4" stroke-width="1"/>`
        }
        document.getElementById("wave").innerHTML = `
            <rect x="5" y="3" width="615" height="39" fill="#141414"/>
            ${channel(23, 1)}${channel(62, 5)}
            <path d="M78.5 4v78" stroke="#2f9a4c" stroke-width="1.500"/>
            <path d="M411.5 4v78" stroke="#9a2038"/>
        `

        // piano keys
        let keys = ""
        for (let i = 0; i < 15; i++) keys += `<rect x="${i * 10}" y="0" width="9" height="53" fill="#ededed"/>`
        for (const x of [7, 17, 37, 47, 57, 77, 87, 107, 117, 127]) keys += `<rect x="${x}" y="0" width="7" height="34" fill="#444"/>`
        document.getElementById("keys").innerHTML = `<rect width="150" height="53" fill="#888"/>` + keys
    </script>
    </body>
</html>
